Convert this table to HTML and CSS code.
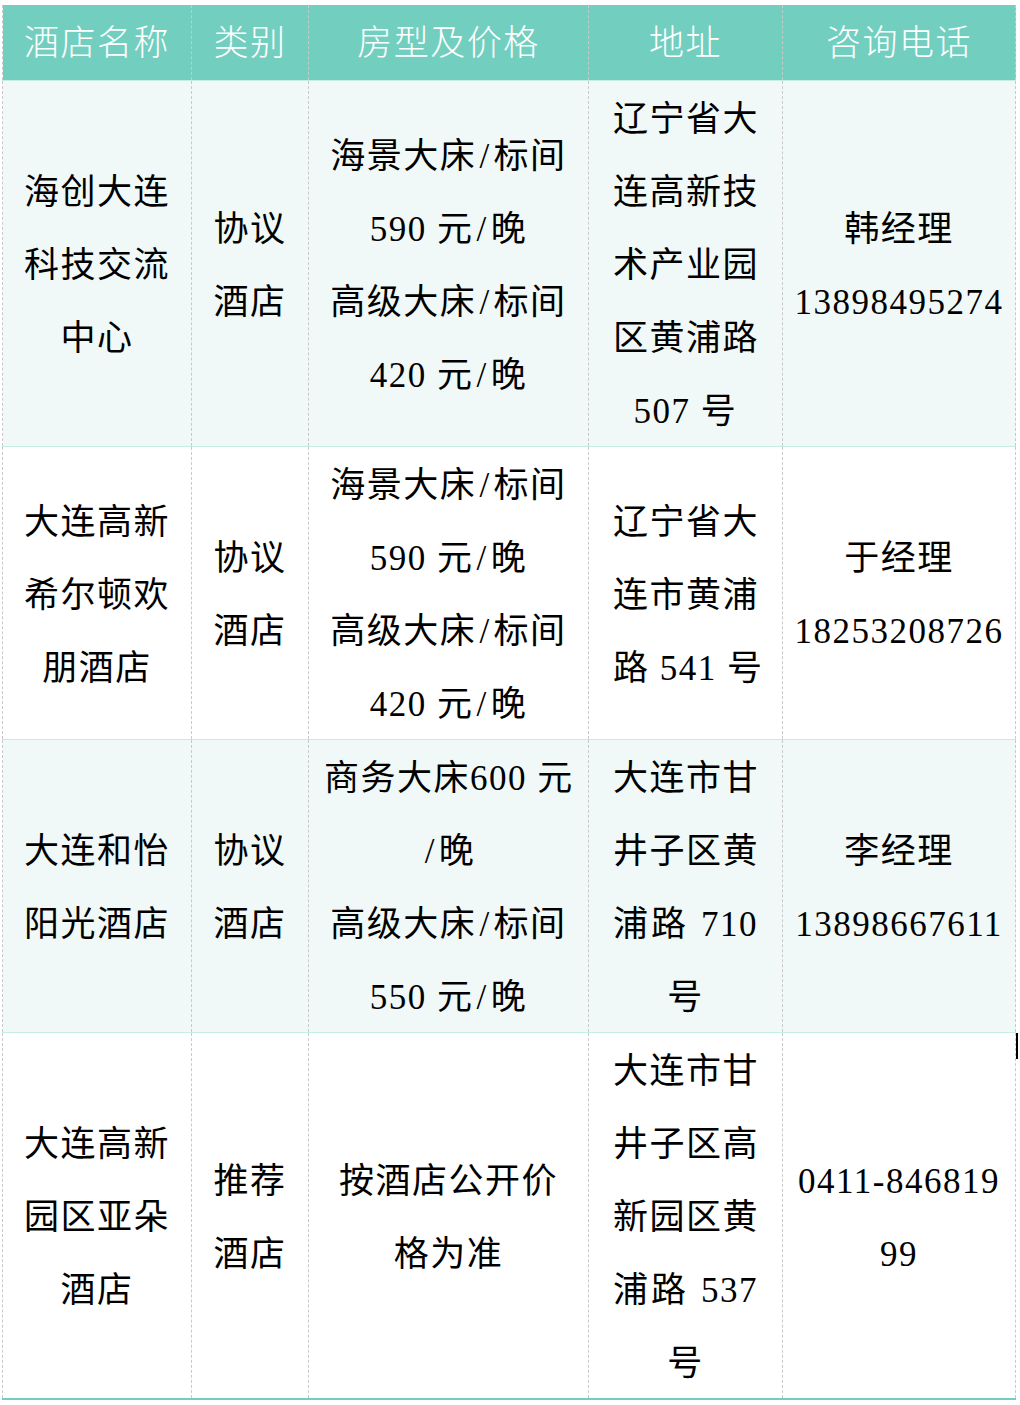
FILE: index.html
```html
<!DOCTYPE html>
<html lang="zh-CN">
<head>
<meta charset="utf-8">
<title>酒店信息</title>
<link rel="stylesheet" href="styles.css">
</head>
<body>
<table class="hotels">
  <colgroup>
    <col class="c-name">
    <col class="c-type">
    <col class="c-price">
    <col class="c-addr">
    <col class="c-tel">
  </colgroup>
  <thead>
    <tr>
      <th>酒店名称</th>
      <th>类别</th>
      <th>房型及价格</th>
      <th>地址</th>
      <th>咨询电话</th>
    </tr>
  </thead>
  <tbody>
    <tr class="alt">
      <td class="name"><div>海创大连</div><div>科技交流</div><div>中心</div></td>
      <td class="type"><div>协议</div><div>酒店</div></td>
      <td class="price"><div>海景大床<span class="sl">/</span>标间</div><div>590 元<span class="sl">/</span>晚</div><div>高级大床<span class="sl">/</span>标间</div><div>420 元<span class="sl">/</span>晚</div></td>
      <td class="addr"><div>辽宁省大</div><div>连高新技</div><div>术产业园</div><div class="j">区黄浦路</div><div>507 号</div></td>
      <td class="tel"><div>韩经理</div><div>13898495274</div></td>
    </tr>
    <tr>
      <td class="name"><div>大连高新</div><div>希尔顿欢</div><div>朋酒店</div></td>
      <td class="type"><div>协议</div><div>酒店</div></td>
      <td class="price"><div>海景大床<span class="sl">/</span>标间</div><div>590 元<span class="sl">/</span>晚</div><div>高级大床<span class="sl">/</span>标间</div><div>420 元<span class="sl">/</span>晚</div></td>
      <td class="addr"><div>辽宁省大</div><div>连市黄浦</div><div class="j">路 541 号</div></td>
      <td class="tel"><div>于经理</div><div>18253208726</div></td>
    </tr>
    <tr class="alt">
      <td class="name"><div>大连和怡</div><div>阳光酒店</div></td>
      <td class="type"><div>协议</div><div>酒店</div></td>
      <td class="price"><div class="j">商务大床600 元</div><div><span class="sl">/</span>晚</div><div>高级大床<span class="sl">/</span>标间</div><div>550 元<span class="sl">/</span>晚</div></td>
      <td class="addr"><div>大连市甘</div><div>井子区黄</div><div class="j">浦路 710</div><div>号</div></td>
      <td class="tel"><div>李经理</div><div>13898667611</div></td>
    </tr>
    <tr class="last">
      <td class="name"><div>大连高新</div><div>园区亚朵</div><div>酒店</div></td>
      <td class="type"><div>推荐</div><div>酒店</div></td>
      <td class="price"><div>按酒店公开价</div><div>格为准</div></td>
      <td class="addr"><div>大连市甘</div><div>井子区高</div><div>新园区黄</div><div class="j">浦路 537</div><div>号</div></td>
      <td class="tel"><div>0411-846819</div><div>99</div></td>
    </tr>
  </tbody>
</table>
<div class="caret"></div>
</body>
</html>
```

FILE: styles.css
```css
html, body {
  margin: 0;
  padding: 0;
  background: #ffffff;
}

body {
  position: relative;
  width: 1020px;
  height: 1405px;
  overflow: hidden;
  font-family: "Liberation Serif", "Noto Sans CJK SC", serif;
  color: #000000;
}

.hotels {
  margin: 5px 0 0 2px;
  border-collapse: collapse;
  table-layout: fixed;
  width: 1013px;
  font-size: 35px;
  letter-spacing: 1.5px;
}

.c-name { width: 189px; }
.c-type { width: 117px; }
.c-price { width: 280px; }
.c-addr { width: 194px; }
.c-tel { width: 233px; }

.hotels th,
.hotels td {
  border-left: 1px dashed #c9c9c9;
  border-right: 1px dashed #c9c9c9;
  text-align: center;
  vertical-align: middle;
  white-space: nowrap;
}

.hotels th {
  background: #72cfc0;
  color: #ffffff;
  font-weight: 300;
  padding: 2px 0 0;
  line-height: 73px;
  border-bottom: 1px solid #c6ece6;
}

.hotels td {
  padding: 2px 12px 0;
  line-height: 73px;
  font-weight: 400;
  border-bottom: 1px solid #c6ece6;
}

.hotels td div:last-child {
  margin-bottom: -2px;
}

.hotels tr.alt td {
  background: #f0f9f8;
}

.hotels tr.last td {
  border-bottom: 2px solid #72cfc0;
}

.hotels td.price {
  padding: 2px 15px 0;
}

.hotels td.addr {
  padding: 2px 24px 0;
}

.hotels td.tel {
  padding: 2px 8px 0;
}

.hotels td .j {
  text-align: justify;
  text-align-last: justify;
}

.sl {
  margin: 0 3px;
}

.caret {
  position: absolute;
  left: 1016px;
  top: 1033px;
  width: 2px;
  height: 26px;
  background: #000000;
}
```
